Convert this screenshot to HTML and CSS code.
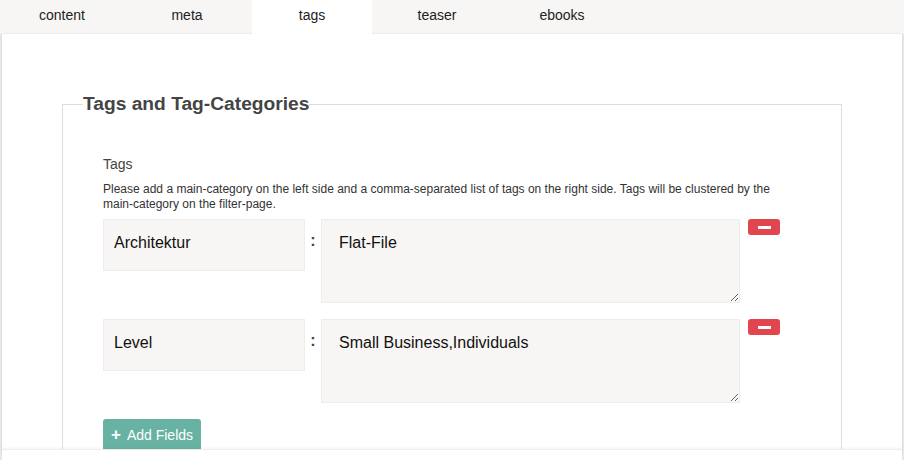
FILE: index.html
```html
<!DOCTYPE html>
<html>
<head>
<meta charset="utf-8">
<link rel="stylesheet" href="styles.css">
</head>
<body>
<nav class="tabs">
  <a class="tab">content</a>
  <a class="tab">meta</a>
  <a class="tab active">tags</a>
  <a class="tab">teaser</a>
  <a class="tab">ebooks</a>
</nav>
<main class="panel">
  <fieldset class="group">
    <legend class="legend">Tags and Tag-Categories</legend>
    <div class="group-body">
      <div class="label">Tags</div>
      <p class="help">Please add a main-category on the left side and a comma-separated list of tags on the right side. Tags will be clustered by the main-category on the filter-page.</p>
      <div class="row">
        <input class="key" type="text" value="Architektur">
        <span class="colon">:</span>
        <textarea class="val">Flat-File</textarea>
        <button class="remove"><span class="minus"></span></button>
      </div>
      <div class="row">
        <input class="key" type="text" value="Level">
        <span class="colon">:</span>
        <textarea class="val">Small Business,Individuals</textarea>
        <button class="remove"><span class="minus"></span></button>
      </div>
      <button class="add"><span class="plus">+</span>Add Fields</button>
    </div>
  </fieldset>
</main>
<div class="footer"></div>
</body>
</html>
```
FILE: styles.css
```css
html, body {
  margin: 0;
  padding: 0;
  height: 100%;
  overflow: hidden;
}
body {
  background: #e9e9e9;
  font-family: "Liberation Sans", Arial, sans-serif;
  color: #333;
}
.tabs {
  display: flex;
  gap: 5px;
  height: 34px;
  padding-left: 2px;
  background: #f7f6f4;
}
.tab {
  width: 120px;
  text-align: center;
  font-size: 14px;
  line-height: 30px;
  color: #222;
}
.tab.active {
  background: #fff;
}
.panel {
  margin: 0 2px;
  height: 420px;
  background: #fff;
  box-shadow: 0 0 2px rgba(0,0,0,0.12);
  padding-top: 58px;
  box-sizing: border-box;
  overflow: hidden;
}
.group {
  margin: 0 0 0 60px;
  width: 780px;
  box-sizing: border-box;
  border: 1px solid #ddd;
  padding: 0 20px;
  min-height: 360px;
}
.legend {
  padding: 0;
  font-size: 19.2px;
  font-weight: bold;
  color: #444;
  line-height: 24px;
}
.group-body {
  padding: 40px 20px 0;
}
.label {
  font-size: 14px;
  color: #444;
  line-height: 16px;
}
.help {
  font-size: 12px;
  line-height: 15px;
  color: #333;
  margin: 10px 0 7px;
  width: 680px;
}
.row {
  display: flex;
  align-items: flex-start;
  margin-bottom: 16px;
}
.key {
  width: 202px;
  height: 52px;
  box-sizing: border-box;
  border: 1px solid #eeedeb;
  background: #f7f6f4;
  padding: 0 10px 4px;
  font-family: "Liberation Sans", Arial, sans-serif;
  font-size: 16px;
  color: #111;
  outline: none;
  margin: 0;
}
.colon {
  width: 16px;
  text-align: center;
  font-weight: bold;
  font-size: 16px;
  line-height: 18px;
  padding-top: 13px;
  color: #444;
}
.val {
  width: 419px;
  height: 84px;
  box-sizing: border-box;
  border: 1px solid #eeedeb;
  background: #f7f6f4;
  padding: 13px 17px;
  font-family: "Liberation Sans", Arial, sans-serif;
  font-size: 16px;
  line-height: 20px;
  color: #111;
  margin: 0;
  outline: none;
}
.remove {
  margin-left: 8px;
  width: 32px;
  height: 16px;
  border: none;
  border-radius: 3px;
  background: #e1464f;
  padding: 0;
  display: flex;
  align-items: center;
  justify-content: center;
}
.minus {
  width: 13px;
  height: 3px;
  background: #fff;
}
.add {
  margin-top: 0;
  height: 32px;
  width: 98px;
  border: none;
  border-radius: 3px;
  background: #67b2a2;
  color: #fff;
  font-family: "Liberation Sans", Arial, sans-serif;
  font-size: 14px;
  padding: 0;
  display: flex;
  align-items: center;
  justify-content: center;
  gap: 6px;
}
.plus {
  font-weight: bold;
  font-size: 17px;
  line-height: 14px;
}
.footer {
  position: fixed;
  left: 2px;
  right: 2px;
  top: 449px;
  bottom: 0;
  background: #fff;
  border-top: 1px solid #eee;
  box-shadow: 0 -1px 2px rgba(0,0,0,0.05);
}
```
